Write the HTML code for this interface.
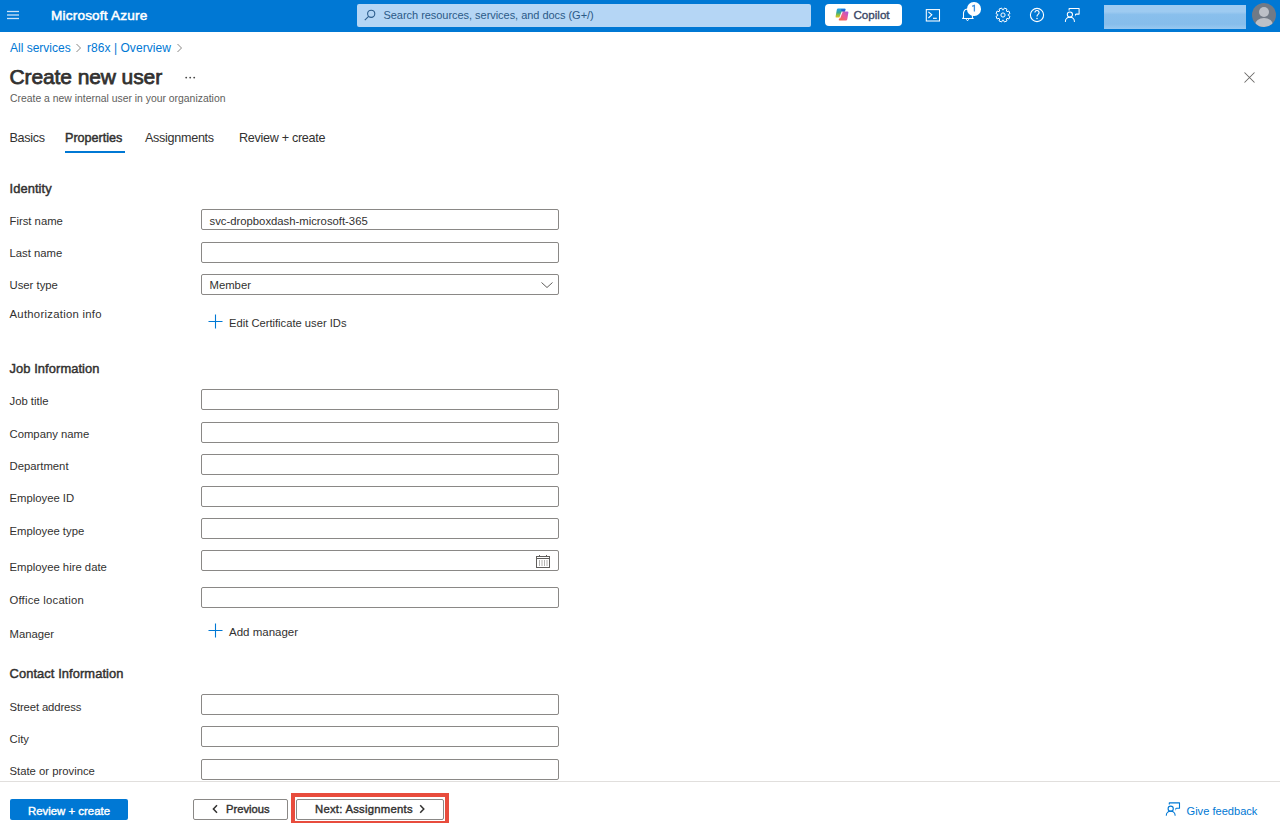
<!DOCTYPE html>
<html><head><meta charset="utf-8">
<style>
*{box-sizing:border-box;margin:0;padding:0}
html,body{width:1280px;height:823px;overflow:hidden;background:#fff;font-family:"Liberation Sans",sans-serif;color:#323130}
.abs{position:absolute;white-space:nowrap;line-height:1}
#hdr{position:absolute;left:0;top:0;width:1280px;height:32px;background:#0078d4}
.search{position:absolute;left:357px;top:4px;width:454px;height:22.5px;background:#b5d6f5;border-radius:2px}
.copilot{position:absolute;left:825px;top:4px;width:77px;height:22px;background:#fff;border-radius:4px}
.lbl{position:absolute;left:9.5px;font-size:11.3px;line-height:1;color:#323130;white-space:nowrap}
.sec{position:absolute;left:9.5px;font-size:12.9px;letter-spacing:0.08px;line-height:1;font-weight:normal;-webkit-text-stroke:0.45px #323130;color:#323130;white-space:nowrap}
.inp{position:absolute;left:201px;width:358px;height:21px;border:1px solid #8a8886;border-radius:2px;background:#fff}
.tab{position:absolute;top:132px;font-size:12.6px;letter-spacing:-0.3px;line-height:1;white-space:nowrap;color:#323130}
.ico{position:absolute}
.btn{position:absolute;height:21px;border:1px solid #8a8886;border-radius:2px;background:#fff;font-size:11px;font-weight:bold;line-height:19px;color:#323130;white-space:nowrap}
</style></head>
<body>
<div id="hdr">
  <svg class="ico" style="left:7px;top:10px" width="12.3" height="10" viewBox="0 0 12.3 10"><g stroke="#cfe4f7" stroke-width="1.3"><line x1="0" y1="1.5" x2="12.3" y2="1.5"/><line x1="0" y1="5" x2="12.3" y2="5"/><line x1="0" y1="8.5" x2="12.3" y2="8.5"/></g></svg>
  <div class="abs" style="left:51px;top:9px;font-size:13.6px;letter-spacing:0.18px;-webkit-text-stroke:0.5px #fff;color:#fff">Microsoft Azure</div>
  <div class="search"></div>
  <svg class="ico" style="left:364px;top:9px" width="12" height="12" viewBox="0 0 12 12"><circle cx="7.2" cy="4.8" r="3.6" fill="none" stroke="#2b5c8c" stroke-width="1.1"/><line x1="4.6" y1="7.4" x2="0.8" y2="11.2" stroke="#2b5c8c" stroke-width="1.1"/></svg>
  <div class="abs" style="left:383.5px;top:10px;font-size:11px;letter-spacing:-0.04px;color:#2b5a88">Search resources, services, and docs (G+/)</div>
  <div class="copilot"></div>
  <svg class="ico" style="left:835px;top:8px" width="14" height="13" viewBox="0 0 14 13">
    <defs><linearGradient id="cg1" x1="0" y1="0" x2="0" y2="1"><stop offset="0" stop-color="#1ea0f2"/><stop offset="0.45" stop-color="#3aa890"/><stop offset="0.7" stop-color="#8cc040"/><stop offset="1" stop-color="#e8c020"/></linearGradient>
    <linearGradient id="cg2" x1="1" y1="0" x2="0" y2="1"><stop offset="0" stop-color="#a655e6"/><stop offset="0.5" stop-color="#ee5a92"/><stop offset="1" stop-color="#f56c3c"/></linearGradient></defs>
    <path d="M3.2 0.6 H9.6 Q10.8 0.6 10.4 1.8 L7.6 9.6 H1.6 Q0.4 9.6 0.6 8.4 L1.8 1.8 Q2 0.6 3.2 0.6Z" fill="url(#cg1)"/>
    <path d="M6 1.2 H9.6 Q10.8 0.8 10.4 2 L9.9 3.4 H6.6Z" fill="#2456d6" opacity="0.9"/>
    <path d="M7.4 3.4 H12.4 Q13.6 3.4 13.4 4.6 L12.3 11.2 Q12.1 12.4 10.9 12.4 H4.6 Q3.4 12.4 3.8 11.2Z" fill="url(#cg2)"/>
    <path d="M7.2 3.6 L4.6 10.4" stroke="#fff" stroke-width="1.1"/>
  </svg>
  <div class="abs" style="left:853.5px;top:9px;font-size:11.6px;-webkit-text-stroke:0.35px #3a4766;color:#3a4766">Copilot</div>
  <!-- terminal -->
  <svg class="ico" style="left:925px;top:8px" width="16" height="14" viewBox="0 0 16 14"><rect x="1.3" y="1.6" width="13.2" height="11.4" fill="none" stroke="#fff" stroke-width="1.05"/><path d="M3.4 3.9 L6.8 6.8 L3.4 10" fill="none" stroke="#fff" stroke-width="1.1"/><line x1="8" y1="10.3" x2="11.8" y2="10.3" stroke="#fff" stroke-width="1.1"/></svg>
  <!-- bell -->
  <svg class="ico" style="left:961px;top:6px" width="14" height="16" viewBox="0 0 14 16"><path d="M1.6 12.4 L2.5 11.8 V6.8 a4.5 4.5 0 0 1 8.9 0 V11.8 L12.2 12.4 Z" fill="none" stroke="#fff" stroke-width="1.05" stroke-linejoin="round"/><path d="M5.2 13.2 L6.5 14.8 L7.8 13.2" fill="none" stroke="#fff" stroke-width="1"/></svg>
  <div class="abs" style="left:967px;top:2px;width:13.5px;height:13.5px;border-radius:50%;background:#fff"></div>
  <svg class="ico" style="left:971px;top:4px" width="6" height="9" viewBox="0 0 6 9"><path d="M1.2 2.4 L3.4 1.2 V7.6" fill="none" stroke="#3d8fdd" stroke-width="1.3" stroke-linejoin="round"/></svg>
  <!-- gear -->
  <svg class="ico" style="left:994.5px;top:7px" width="16" height="16" viewBox="0 0 16 16"><path d="M13.18 8.48 L14.97 9.36 L13.89 11.97 L12.00 11.32 L11.32 12.00 L11.97 13.89 L9.36 14.97 L8.48 13.18 L7.52 13.18 L6.64 14.97 L4.03 13.89 L4.68 12.00 L4.00 11.32 L2.11 11.97 L1.03 9.36 L2.82 8.48 L2.82 7.52 L1.03 6.64 L2.11 4.03 L4.00 4.68 L4.68 4.00 L4.03 2.11 L6.64 1.03 L7.52 2.82 L8.48 2.82 L9.36 1.03 L11.97 2.11 L11.32 4.00 L12.00 4.68 L13.89 4.03 L14.97 6.64 L13.18 7.52Z" fill="none" stroke="#fff" stroke-width="1" stroke-linejoin="round"/><circle cx="8" cy="8" r="2.1" fill="none" stroke="#fff" stroke-width="1"/></svg>
  <!-- help -->
  <svg class="ico" style="left:1029px;top:7px" width="16" height="16" viewBox="0 0 16 16"><circle cx="8" cy="8" r="6.6" fill="none" stroke="#fff" stroke-width="1.1"/><path d="M5.9 5.6 a2.1 2.1 0 1 1 3.2 1.8 c-0.8 0.5 -1.1 0.9 -1.1 2" fill="none" stroke="#fff" stroke-width="1.1"/><circle cx="8" cy="11.6" r="0.75" fill="#fff"/></svg>
  <!-- feedback -->
  <svg class="ico" style="left:1064px;top:6px" width="17" height="17" viewBox="0 0 17 17"><path d="M5.1 4.4 V2.5 h10 v5.6 h-3.4" fill="none" stroke="#fff" stroke-width="1.05" stroke-linejoin="round"/><path d="M11 7.9 h1.4 l-1.3 2.5z" fill="#fff"/><circle cx="5.9" cy="8.6" r="2.6" fill="none" stroke="#fff" stroke-width="1.05"/><path d="M1.4 15.4 a4.5 4.3 0 0 1 9 0" fill="none" stroke="#fff" stroke-width="1.05" stroke-linecap="round"/></svg>
  <div class="abs" style="left:1104px;top:5px;width:142px;height:24px;background:linear-gradient(#9ecbf1 0,#9ecbf1 28%,#89bfec 40%,#86bdeb 80%,#98c8f0 100%)"></div>
  <div class="abs" style="left:1252px;top:3px;width:24px;height:24px;border-radius:50%;background:#717a86;overflow:hidden">
    <div style="position:absolute;left:7px;top:4px;width:10px;height:10px;border-radius:50%;background:#bcc0c7"></div>
    <div style="position:absolute;left:3px;top:15px;width:18px;height:14px;border-radius:50%;background:#bcc0c7"></div>
  </div>
</div>

<div class="abs" style="left:10px;top:42px;font-size:12px;color:#0078d4">All services</div>
<svg class="ico" style="left:75px;top:43px" width="7" height="10" viewBox="0 0 7 10"><path d="M1.5 1 L5.5 5 L1.5 9" fill="none" stroke="#8a8886" stroke-width="1"/></svg>
<div class="abs" style="left:87px;top:42px;font-size:12px;letter-spacing:0.05px;color:#0078d4">r86x | Overview</div>
<svg class="ico" style="left:176px;top:43px" width="7" height="10" viewBox="0 0 7 10"><path d="M1.5 1 L5.5 5 L1.5 9" fill="none" stroke="#8a8886" stroke-width="1"/></svg>

<div class="abs" style="left:9.5px;top:65.5px;font-size:21px;letter-spacing:-0.1px;-webkit-text-stroke:0.75px #323130;color:#323130">Create new user</div>
<svg class="ico" style="left:184px;top:75px" width="13" height="5" viewBox="0 0 13 5"><g fill="#4a4948"><circle cx="2.2" cy="2.6" r="0.95"/><circle cx="6.2" cy="2.6" r="0.95"/><circle cx="10.2" cy="2.6" r="0.95"/></g></svg>
<svg class="ico" style="left:1244px;top:72px" width="11" height="11" viewBox="0 0 11 11"><path d="M0.5 0.5 L10.5 10.5 M10.5 0.5 L0.5 10.5" stroke="#6b6968" stroke-width="1.05"/></svg>
<div class="abs" style="left:10px;top:94px;font-size:10.4px;color:#605e5c">Create a new internal user in your organization</div>

<div class="tab" style="left:9.5px">Basics</div>
<div class="tab" style="left:65px;-webkit-text-stroke:0.45px #323130;letter-spacing:0px">Properties</div>
<div class="abs" style="left:65px;top:151px;width:60px;height:2px;background:#0078d4"></div>
<div class="tab" style="left:145px">Assignments</div>
<div class="tab" style="left:239px">Review + create</div>

<div class="sec" style="top:182.5px">Identity</div>
<div class="lbl" style="top:216px">First name</div>
<div class="inp" style="top:209px"></div>
<div class="abs" style="left:209.5px;top:216px;font-size:11.3px;color:#323130">svc-dropboxdash-microsoft-365</div>
<div class="lbl" style="top:248px">Last name</div>
<div class="inp" style="top:242px"></div>
<div class="lbl" style="top:280px">User type</div>
<div class="inp" style="top:274px"></div>
<div class="abs" style="left:209.5px;top:280px;font-size:11.3px;color:#323130">Member</div>
<svg class="ico" style="left:541px;top:281px" width="12" height="8" viewBox="0 0 12 8"><path d="M0.5 1.5 L6 6.5 L11.5 1.5" fill="none" stroke="#605e5c" stroke-width="1"/></svg>
<div class="lbl" style="top:309px;letter-spacing:0.28px">Authorization info</div>
<svg class="ico" style="left:208px;top:314px" width="15" height="15" viewBox="0 0 15 15"><path d="M7.5 0.5 V14.5 M0.5 7.5 H14.5" stroke="#0078d4" stroke-width="1.1"/></svg>
<div class="abs" style="left:229px;top:318px;font-size:11.2px;color:#323130">Edit Certificate user IDs</div>

<div class="sec" style="top:362.5px">Job Information</div>
<div class="lbl" style="top:396px">Job title</div>
<div class="inp" style="top:389px"></div>
<div class="lbl" style="top:429px">Company name</div>
<div class="inp" style="top:422px"></div>
<div class="lbl" style="top:461px">Department</div>
<div class="inp" style="top:454px"></div>
<div class="lbl" style="top:493px">Employee ID</div>
<div class="inp" style="top:486px"></div>
<div class="lbl" style="top:526px">Employee type</div>
<div class="inp" style="top:518px"></div>
<div class="lbl" style="top:562px">Employee hire date</div>
<div class="inp" style="top:550px"></div>
<svg class="ico" style="left:536px;top:555px" width="14" height="13" viewBox="0 0 14 13"><rect x="0.5" y="1.5" width="13" height="11" fill="none" stroke="#605e5c" stroke-width="1"/><line x1="0.5" y1="3.5" x2="13.5" y2="3.5" stroke="#605e5c" stroke-width="1"/><path d="M3.5 0 V2 M10.5 0 V2" stroke="#605e5c" stroke-width="1"/><path d="M3.5 5 V11 M6 5 V11 M8.5 5 V11 M11 5 V11" stroke="#a19f9d" stroke-width="0.8"/></svg>
<div class="lbl" style="top:595px;letter-spacing:0.2px">Office location</div>
<div class="inp" style="top:587px"></div>
<div class="lbl" style="top:629px">Manager</div>
<svg class="ico" style="left:208px;top:623px" width="15" height="15" viewBox="0 0 15 15"><path d="M7.5 0.5 V14.5 M0.5 7.5 H14.5" stroke="#0078d4" stroke-width="1.1"/></svg>
<div class="abs" style="left:229px;top:627px;font-size:11.5px;color:#323130">Add manager</div>

<div class="sec" style="top:667.5px">Contact Information</div>
<div class="lbl" style="top:702px;letter-spacing:-0.12px">Street address</div>
<div class="inp" style="top:694px"></div>
<div class="lbl" style="top:734px">City</div>
<div class="inp" style="top:726px"></div>
<div class="lbl" style="top:766px">State or province</div>
<div class="inp" style="top:759px"></div>

<div class="abs" style="left:0;top:781px;width:1280px;height:42px;background:#fff;border-top:1px solid #e1dfdd"></div>
<div class="abs" style="left:10px;top:799px;width:118px;height:21px;background:#0078d4;border-radius:2px"></div>
<div class="abs" style="left:28px;top:806px;font-size:11.4px;-webkit-text-stroke:0.4px #fff;color:#fff">Review + create</div>

<div class="btn" style="left:193px;top:799px;width:95px"></div>
<svg class="ico" style="left:212px;top:804px" width="7" height="10" viewBox="0 0 7 10"><path d="M5 1.2 L1.4 5 L5 8.8" fill="none" stroke="#323130" stroke-width="1.5"/></svg>
<div class="abs" style="left:226px;top:804px;font-size:11.2px;-webkit-text-stroke:0.4px #323130;color:#323130">Previous</div>

<div class="abs" style="left:291px;top:793px;width:158px;height:32px;border:4px solid #e84c3d"></div>
<div class="btn" style="left:296px;top:799px;width:148px"></div>
<div class="abs" style="left:315px;top:804px;font-size:11.3px;letter-spacing:0.25px;-webkit-text-stroke:0.4px #323130;color:#323130">Next: Assignments</div>
<svg class="ico" style="left:419px;top:804px" width="7" height="10" viewBox="0 0 7 10"><path d="M1.2 1.2 L4.8 5 L1.2 8.8" fill="none" stroke="#323130" stroke-width="1.5"/></svg>

<svg class="ico" style="left:1164px;top:800px" width="17" height="17" viewBox="0 0 17 17"><path d="M5.3 4.6 V2.9 h10.2 v5.4 h-3.4" fill="none" stroke="#0078d4" stroke-width="1.1" stroke-linejoin="round"/><path d="M11.4 8.1 h1.4 l-1.3 2.6z" fill="#0078d4"/><circle cx="6.7" cy="8.7" r="2.6" fill="none" stroke="#0078d4" stroke-width="1.1"/><path d="M2.3 15.3 a4.4 4.2 0 0 1 8.8 0" fill="none" stroke="#0078d4" stroke-width="1.1" stroke-linecap="round"/></svg>
<div class="abs" style="left:1186.5px;top:805.5px;font-size:11.1px;color:#0078d4">Give feedback</div>
</body></html>
